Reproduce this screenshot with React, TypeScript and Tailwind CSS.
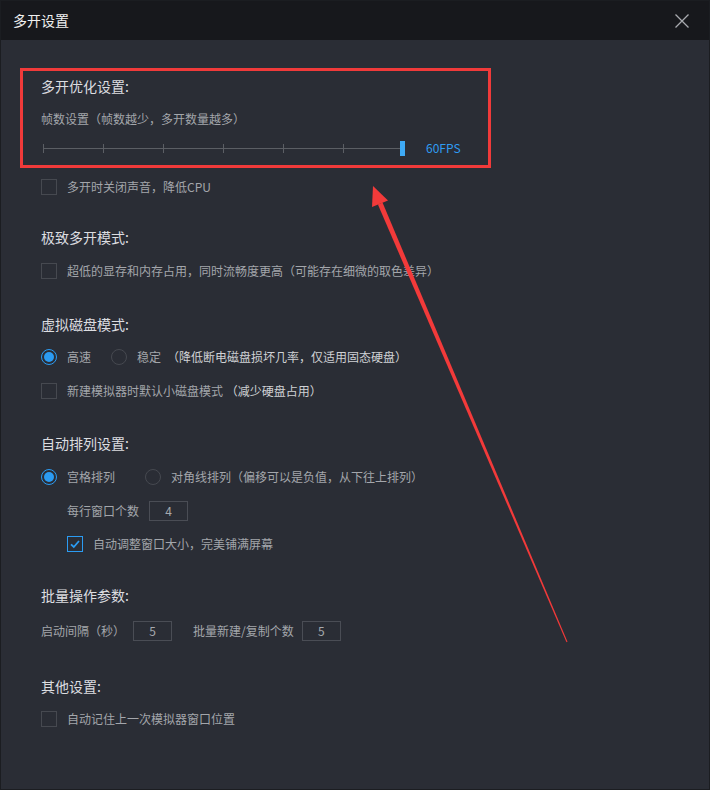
import React from 'react';

const FONT = '"Microsoft YaHei", "Noto Sans CJK SC", "Noto Sans", sans-serif';

function Checkbox({ checked = false }: { checked?: boolean }) {
  if (checked) {
    return (
      <div className="w-[16px] h-[16px] border border-[#2b9bf2] flex items-center justify-center shrink-0">
        <svg width="12" height="12" viewBox="0 0 12 12">
          <path d="M2 6.3 L4.8 9 L10 3" fill="none" stroke="#2b9bf2" strokeWidth="1.8" />
        </svg>
      </div>
    );
  }
  return <div className="w-[16px] h-[16px] border border-[#464950] shrink-0" />;
}

function Radio({ checked = false }: { checked?: boolean }) {
  if (checked) {
    return (
      <div className="w-[16px] h-[16px] rounded-full border-[1.5px] border-[#2b9bf2] flex items-center justify-center shrink-0">
        <div className="w-[10px] h-[10px] rounded-full bg-[#2b9bf2]" />
      </div>
    );
  }
  return <div className="w-[16px] h-[16px] rounded-full border border-[#464950] shrink-0" />;
}

function NumBox({ value }: { value: string }) {
  return (
    <div className="w-[39px] h-[20px] border border-[#4a4d55] flex items-center justify-center text-[12px] text-[#a6a9ae]">
      {value}
    </div>
  );
}

function Heading({ children, className = '' }: { children: React.ReactNode; className?: string }) {
  return <div className={`h-5 flex items-center text-[14px] text-[#dcdde0] ${className}`}>{children}</div>;
}

export default function App() {
  return (
    <div
      className="relative w-[710px] h-[790px] border border-[#1b1d21] bg-[#2a2d35] overflow-hidden"
      style={{ fontFamily: FONT }}
    >
      {/* title bar */}
      <div className="h-[39px] bg-[#17181c] flex items-center justify-between pl-[12px] pr-[20px]">
        <span className="text-[14px] text-[#f0f0f0]">多开设置</span>
        <svg width="14" height="14" viewBox="0 0 14 14">
          <path d="M0.5 0.5 L13.5 13.5 M13.5 0.5 L0.5 13.5" stroke="#a9abaf" strokeWidth="1.3" />
        </svg>
      </div>

      <div className="pl-[40px] pt-[28px] flex flex-col text-[12px] text-[#a3a6ab]">
        {/* highlighted block */}
        <div className="-ml-[21px] w-[471px] border-[3px] border-[#f03a3a] pl-[18px] pb-[7px] flex flex-col">
          <Heading className="mt-[5px]">多开优化设置:</Heading>
          <div className="mt-[13px] h-5 flex items-center">帧数设置（帧数越少，多开数量越多）</div>
          <div className="mt-[9px] h-5 flex items-center">
            <svg width="365" height="20" viewBox="0 0 365 20" className="ml-[2px]">
              <line x1="0" y1="10.5" x2="358" y2="10.5" stroke="#5b5e64" strokeWidth="1" />
              {[0, 60, 120, 180, 240, 300].map((x) => (
                <line key={x} x1={x + 0.5} y1="6" x2={x + 0.5} y2="15" stroke="#5b5e64" strokeWidth="1" />
              ))}
              <rect x="357" y="3" width="5" height="15" fill="#3eaaf5" />
            </svg>
            <span className="ml-[18px] text-[#2f9cf2]">60FPS</span>
          </div>
        </div>

        <div className="mt-[9px] h-5 flex items-center gap-[10px]">
          <Checkbox />
          <span>多开时关闭声音，降低CPU</span>
        </div>

        <Heading className="mt-[30px]">极致多开模式:</Heading>
        <div className="mt-[14px] h-5 flex items-center gap-[10px]">
          <Checkbox />
          <span>超低的显存和内存占用，同时流畅度更高（可能存在细微的取色差异）</span>
        </div>

        <Heading className="mt-[33px]">虚拟磁盘模式:</Heading>
        <div className="mt-[13px] h-5 flex items-center">
          <Radio checked />
          <span className="ml-[10px]">高速</span>
          <div className="ml-[20px]">
            <Radio />
          </div>
          <span className="ml-[10px]">稳定</span>
          <span className="ml-[6px] text-[#cfd1d4]">（降低断电磁盘损坏几率，仅适用固态硬盘）</span>
        </div>
        <div className="mt-[14px] h-5 flex items-center gap-[10px]">
          <Checkbox />
          <span>
            新建模拟器时默认小磁盘模式 <span className="text-[#cfd1d4]">（减少硬盘占用）</span>
          </span>
        </div>

        <Heading className="mt-[32px]">自动排列设置:</Heading>
        <div className="mt-[14px] h-5 flex items-center">
          <Radio checked />
          <span className="ml-[10px]">宫格排列</span>
          <div className="ml-[30px]">
            <Radio />
          </div>
          <span className="ml-[10px]">对角线排列（偏移可以是负值，从下往上排列）</span>
        </div>
        <div className="mt-[14px] h-5 flex items-center pl-[26px] gap-[10px]">
          <span>每行窗口个数</span>
          <NumBox value="4" />
        </div>
        <div className="mt-[13px] h-5 flex items-center pl-[26px] gap-[10px]">
          <Checkbox checked />
          <span>自动调整窗口大小，完美铺满屏幕</span>
        </div>

        <Heading className="mt-[31px]">批量操作参数:</Heading>
        <div className="mt-[16px] h-5 flex items-center">
          <span>启动间隔（秒）</span>
          <div className="ml-[8px]">
            <NumBox value="5" />
          </div>
          <span className="ml-[21px]">批量新建/复制个数</span>
          <div className="ml-[8px]">
            <NumBox value="5" />
          </div>
        </div>

        <Heading className="mt-[35px]">其他设置:</Heading>
        <div className="mt-[13px] h-5 flex items-center gap-[10px]">
          <Checkbox />
          <span>自动记住上一次模拟器窗口位置</span>
        </div>
      </div>

      {/* red annotation arrow */}
      <svg
        className="absolute left-[-1px] top-[-1px] pointer-events-none"
        width="710"
        height="790"
        viewBox="0 0 710 790"
      >
        <polygon points="377.9,204.5 382.5,202.5 567.5,641.8 566.5,642.2" fill="#f23a3a" />
        <polygon points="373,186 372,207 388,200.5" fill="#f23a3a" />
      </svg>
    </div>
  );
}
